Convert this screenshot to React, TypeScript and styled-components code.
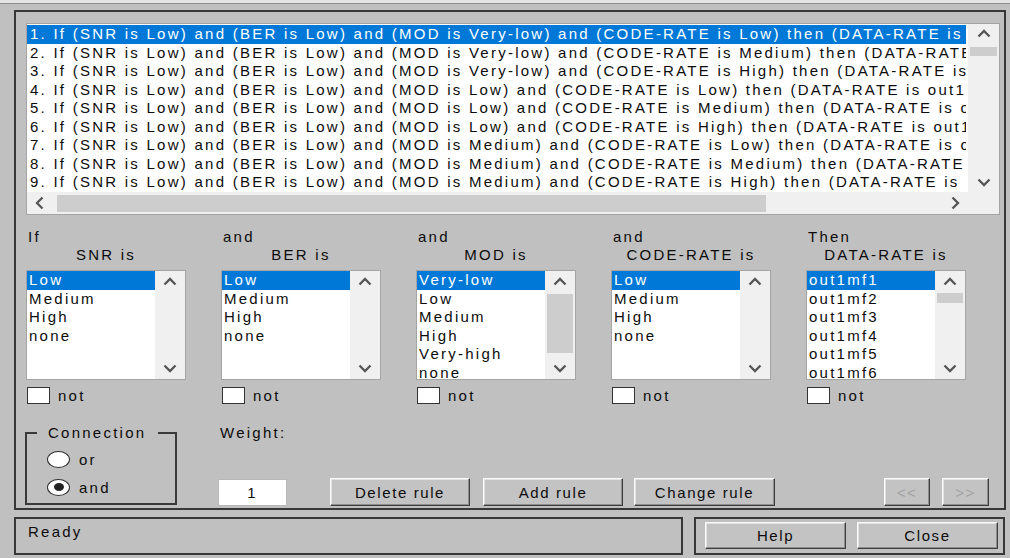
import React from 'react'
import styled, { createGlobalStyle } from 'styled-components'

const GlobalStyle = createGlobalStyle`
  html, body {
    margin: 0;
    padding: 0;
    background: #c0c0c0;
  }
  body {
    font-family: "Liberation Sans", Arial, sans-serif;
    font-size: 15px;
    letter-spacing: 2.25px;
    color: #0c0c0c;
  }
`

const Window = styled.div`
  width: 1010px;
  height: 558px;
  box-sizing: border-box;
  background: #c0c0c0;
  border-top: 3px solid #e4e4e4;
  box-shadow: inset 0 1px 0 #8e8e8e;
  padding: 7px 4px 0 14px;
  display: flex;
  flex-direction: column;
  gap: 7px;
`

const Panel = styled.div`
  width: 992px;
  height: 500px;
  box-sizing: border-box;
  border: 2px solid #383838;
  padding: 11px 4px 2px 10px;
  display: flex;
  flex-direction: column;
`

/* ---------- rule list ---------- */

const RuleList = styled.div`
  width: 974px;
  height: 192px;
  box-sizing: border-box;
  border: 1px solid #a4a4a4;
  background: #fff;
  display: grid;
  grid-template-columns: 941px 31px;
  grid-template-rows: 168px 22px;
`

const RuleRows = styled.div`
  padding-top: 1px;
  overflow: hidden;
`

const RuleRow = styled.div<{ $selected?: boolean }>`
  height: 18.5px;
  line-height: 18.5px;
  padding-left: 3px;
  margin-right: 2px;
  white-space: nowrap;
  overflow: hidden;
  background: ${p => (p.$selected ? '#0078d7' : 'transparent')};
  color: ${p => (p.$selected ? '#fff' : '#0c0c0c')};
`

const VScroll = styled.div`
  background: #f0f0f0;
  display: flex;
  flex-direction: column;
  align-items: center;
`

const ArrowBox = styled.div<{ $size: number }>`
  height: ${p => p.$size}px;
  width: 100%;
  flex: none;
  display: flex;
  align-items: center;
  justify-content: center;
`

const HArrowBox = styled(ArrowBox)`
  width: ${p => p.$size}px;
  height: 100%;
`

const Thumb = styled.div<{ $top: number; $height: number }>`
  flex: none;
  width: calc(100% - 4px);
  margin-top: ${p => p.$top}px;
  height: ${p => p.$height}px;
  background: #cdcdcd;
`

const Fill = styled.div`
  flex: 1;
`

const HScroll = styled.div`
  background: #f0f0f0;
  display: flex;
  align-items: center;
`

const HThumb = styled.div`
  width: 709px;
  height: 17px;
  margin-left: 4px;
  background: #cdcdcd;
`

const Corner = styled.div`
  background: #f0f0f0;
`

/* ---------- antecedent / consequent columns ---------- */

const Columns = styled.div`
  margin-top: 13px;
  display: grid;
  grid-template-columns: repeat(5, 160px);
  column-gap: 35px;
`

const Column = styled.div`
  display: flex;
  flex-direction: column;
`

const Caption = styled.div`
  height: 18px;
  line-height: 18px;
  padding-left: 2px;
`

const VarName = styled.div`
  height: 18px;
  line-height: 18px;
  text-align: center;
  white-space: nowrap;
`

const ListBox = styled.div`
  margin-top: 6px;
  height: 110px;
  box-sizing: border-box;
  border: 1px solid #a4a4a4;
  background: #fff;
  display: flex;
  overflow: hidden;
`

const Items = styled.div`
  width: 128px;
  overflow: hidden;
`

const Item = styled.div<{ $selected?: boolean }>`
  height: 18.5px;
  line-height: 18.5px;
  padding-left: 2px;
  white-space: nowrap;
  background: ${p => (p.$selected ? '#0078d7' : 'transparent')};
  color: ${p => (p.$selected ? '#fff' : '#0c0c0c')};
`

const ListScroll = styled(VScroll)`
  width: 30px;
`

const NotRow = styled.label`
  margin-top: 7px;
  margin-left: 1px;
  height: 17px;
  display: flex;
  align-items: center;
  gap: 8px;
`

const CheckBox = styled.span`
  width: 23px;
  height: 17px;
  box-sizing: border-box;
  border: 1px solid #333;
  background: #fff;
`

/* ---------- bottom controls ---------- */

const Bottom = styled.div`
  margin-top: 20px;
  height: 82px;
  display: flex;
`

const Connection = styled.fieldset`
  margin: 0 0 1px -1px;
  width: 152px;
  box-sizing: border-box;
  border: 2px solid #3a3a3a;
  padding: 0 0 2px 10px;
  min-width: 0;
`

const Legend = styled.legend`
  padding: 0 12px 0 11px;
  height: 18px;
  line-height: 18px;
`

const RadioRow = styled.label`
  height: 28px;
  padding-left: 10px;
  display: flex;
  align-items: center;
  gap: 9px;
  &:first-of-type {
    margin-top: 3px;
  }
`

const Radio = styled.span<{ $checked?: boolean }>`
  width: 23px;
  height: 17px;
  box-sizing: border-box;
  border: 1px solid #2e2e2e;
  border-radius: 50%;
  background: #fff;
  display: flex;
  align-items: center;
  justify-content: center;
  &::after {
    content: '';
    display: ${p => (p.$checked ? 'block' : 'none')};
    width: 10px;
    height: 8px;
    border-radius: 50%;
    background: #222;
  }
`

const Actions = styled.div`
  margin-left: 41px;
  flex: 1;
  display: flex;
  flex-direction: column;
`

const WeightLabel = styled.div`
  height: 18px;
  line-height: 18px;
  padding-left: 2px;
`

const ButtonRow = styled.div`
  margin-top: 36px;
  display: flex;
  align-items: center;
`

const WeightInput = styled.div`
  width: 69px;
  height: 27px;
  box-sizing: border-box;
  border: 1px solid #b8b8b8;
  background: #fff;
  display: flex;
  align-items: center;
  justify-content: center;
  margin-right: 43px;
`

const Button = styled.button<{ $width: number; $gap?: number; $disabled?: boolean }>`
  width: ${p => p.$width}px;
  height: 28px;
  margin-left: ${p => p.$gap ?? 0}px;
  padding: 0;
  font: inherit;
  letter-spacing: 1.6px;
  background: #c3c3c3;
  color: ${p => (p.$disabled ? '#a2a2a2' : '#0c0c0c')};
  border: 1px solid;
  border-color: #fbfbfb #3e3e3e #3e3e3e #fbfbfb;
  box-shadow: inset -1px -1px 0 #8e8e8e, inset 1px 1px 0 #e2e2e2;
  cursor: default;
`

const Spacer = styled.div`
  flex: 1;
`

/* ---------- status line ---------- */

const StatusRow = styled.div`
  height: 38px;
  display: flex;
  gap: 11px;
`

const StatusBox = styled.div`
  width: 669px;
  box-sizing: border-box;
  border: 2px solid #383838;
  padding: 4px 0 0 12px;
  line-height: 18px;
`

const DialogButtons = styled.div`
  width: 311px;
  box-sizing: border-box;
  border: 2px solid #383838;
  padding: 3px 0 0 9px;
  display: flex;
  align-items: flex-start;
  gap: 11px;
`

const DialogButton = styled(Button)`
  height: 27px;
`

/* ---------- arrow glyphs ---------- */

type Dir = 'up' | 'down' | 'left' | 'right'

const arrowPaths: Record<Dir, string> = {
  up: 'M1.5 7.5 L7 2 L12.5 7.5',
  down: 'M1.5 2.5 L7 8 L12.5 2.5',
  left: 'M7.5 1.5 L2 7 L7.5 12.5',
  right: 'M2.5 1.5 L8 7 L2.5 12.5',
}

const Arrow: React.FC<{ dir: Dir }> = ({ dir }) => {
  const vertical = dir === 'up' || dir === 'down'
  return (
    <svg width={vertical ? 14 : 10} height={vertical ? 10 : 14} viewBox={vertical ? '0 0 14 10' : '0 0 10 14'}>
      <path d={arrowPaths[dir]} fill="none" stroke="#555" strokeWidth={2.3} />
    </svg>
  )
}

/* ---------- data ---------- */

const mods = ['Very-low', 'Very-low', 'Very-low', 'Low', 'Low', 'Low', 'Medium', 'Medium', 'Medium']
const codes = ['Low', 'Medium', 'High']

const rules = mods.map(
  (mod, i) =>
    `${i + 1}. If (SNR is Low) and (BER is Low) and (MOD is ${mod}) and (CODE-RATE is ${codes[i % 3]}) then (DATA-RATE is out1mf${i + 1}) (1)`
)

interface VarColumn {
  caption: string
  name: string
  items: string[]
  thumb?: { top: number; height: number }
}

const columns: VarColumn[] = [
  { caption: 'If', name: 'SNR is', items: ['Low', 'Medium', 'High', 'none'] },
  { caption: 'and', name: 'BER is', items: ['Low', 'Medium', 'High', 'none'] },
  {
    caption: 'and',
    name: 'MOD is',
    items: ['Very-low', 'Low', 'Medium', 'High', 'Very-high', 'none'],
    thumb: { top: 1, height: 59 },
  },
  { caption: 'and', name: 'CODE-RATE is', items: ['Low', 'Medium', 'High', 'none'] },
  {
    caption: 'Then',
    name: 'DATA-RATE is',
    items: ['out1mf1', 'out1mf2', 'out1mf3', 'out1mf4', 'out1mf5', 'out1mf6'],
    thumb: { top: 0, height: 10 },
  },
]

const App: React.FC = () => {
  return (
    <Window>
      <GlobalStyle />
      <Panel>
        <RuleList>
          <RuleRows>
            {rules.map((r, i) => (
              <RuleRow key={i} $selected={i === 0}>
                {r}
              </RuleRow>
            ))}
          </RuleRows>
          <VScroll>
            <ArrowBox $size={20}>
              <Arrow dir="up" />
            </ArrowBox>
            <Thumb $top={3} $height={9} />
            <Fill />
            <ArrowBox $size={20}>
              <Arrow dir="down" />
            </ArrowBox>
          </VScroll>
          <HScroll>
            <HArrowBox $size={26}>
              <Arrow dir="left" />
            </HArrowBox>
            <HThumb />
            <Fill />
            <HArrowBox $size={27}>
              <Arrow dir="right" />
            </HArrowBox>
          </HScroll>
          <Corner />
        </RuleList>

        <Columns>
          {columns.map(col => (
            <Column key={col.name}>
              <Caption>{col.caption}</Caption>
              <VarName>{col.name}</VarName>
              <ListBox>
                <Items>
                  {col.items.map((it, i) => (
                    <Item key={it} $selected={i === 0}>
                      {it}
                    </Item>
                  ))}
                </Items>
                <ListScroll>
                  <ArrowBox $size={22}>
                    <Arrow dir="up" />
                  </ArrowBox>
                  {col.thumb && <Thumb $top={col.thumb.top} $height={col.thumb.height} />}
                  <Fill />
                  <ArrowBox $size={22}>
                    <Arrow dir="down" />
                  </ArrowBox>
                </ListScroll>
              </ListBox>
              <NotRow>
                <CheckBox />
                not
              </NotRow>
            </Column>
          ))}
        </Columns>

        <Bottom>
          <Connection>
            <Legend>Connection</Legend>
            <RadioRow>
              <Radio />
              or
            </RadioRow>
            <RadioRow>
              <Radio $checked />
              and
            </RadioRow>
          </Connection>
          <Actions>
            <WeightLabel>Weight:</WeightLabel>
            <ButtonRow>
              <WeightInput>1</WeightInput>
              <Button $width={140}>Delete rule</Button>
              <Button $width={140} $gap={13}>
                Add rule
              </Button>
              <Button $width={141} $gap={11}>
                Change rule
              </Button>
              <Spacer />
              <Button $width={46} $disabled>
                &lt;&lt;
              </Button>
              <Button $width={47} $gap={12} $disabled style={{ marginRight: 11 }}>
                &gt;&gt;
              </Button>
            </ButtonRow>
          </Actions>
        </Bottom>
      </Panel>

      <StatusRow>
        <StatusBox>Ready</StatusBox>
        <DialogButtons>
          <DialogButton $width={141}>Help</DialogButton>
          <DialogButton $width={141}>Close</DialogButton>
        </DialogButtons>
      </StatusRow>
    </Window>
  )
}

export default App
